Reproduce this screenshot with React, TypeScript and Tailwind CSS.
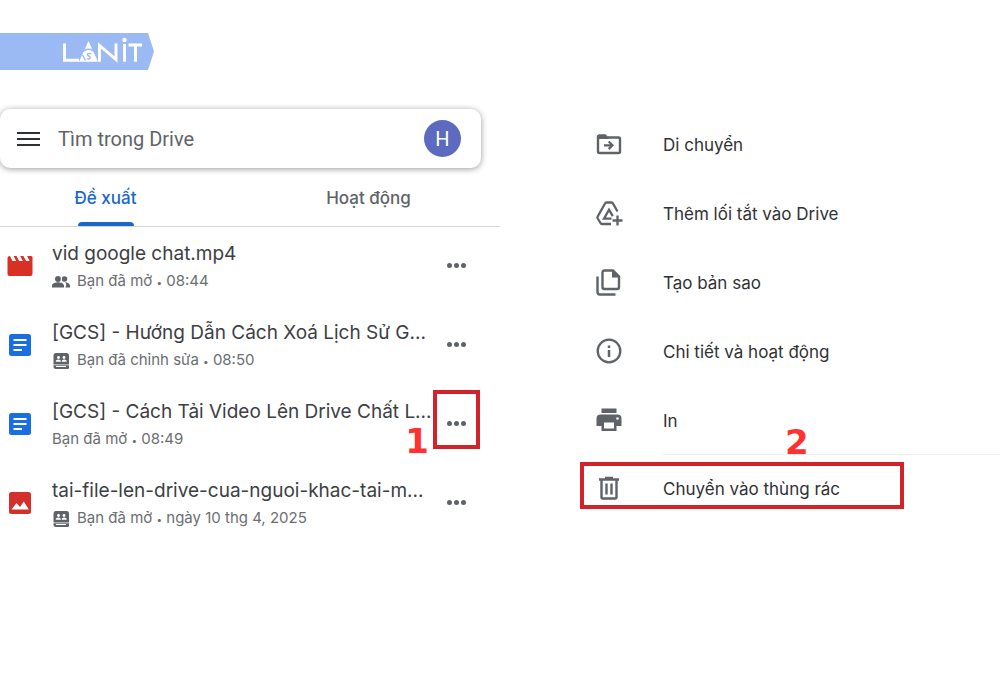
import { useState } from "react";
import type { ReactNode } from "react";

type FileKind = "video" | "doc" | "image";
type ShareKind = "people" | "team" | "none";

interface FileItem {
  id: number;
  kind: FileKind;
  share: ShareKind;
  title: string;
  action: string;
  time: string;
  step?: string;
}

interface MenuItem {
  label: string;
  icon: ReactNode;
  step?: string;
}

const files: FileItem[] = [
  { id: 1, kind: "video", share: "people", title: "vid google chat.mp4", action: "Bạn đã mở", time: "08:44" },
  { id: 2, kind: "doc", share: "team", title: "[GCS] - Hướng Dẫn Cách Xoá Lịch Sử G...", action: "Bạn đã chỉnh sửa", time: "08:50" },
  { id: 3, kind: "doc", share: "none", title: "[GCS] - Cách Tải Video Lên Drive Chất L...", action: "Bạn đã mở", time: "08:49", step: "1" },
  { id: 4, kind: "image", share: "team", title: "tai-file-len-drive-cua-nguoi-khac-tai-m...", action: "Bạn đã mở", time: "ngày 10 thg 4, 2025" },
];

const Logo = () => (
  <svg viewBox="0 0 154 37" className="h-[37px] w-[154px]" role="img" aria-label="LANIT">
    <path d="M0 0h148l6 18.500-6 18.500H0z" fill="#9bbaf4" />
    <g fill="none" stroke="#fff" strokeWidth="2.900">
      <path d="M64.500 10.500v16.800H79" />
      <path d="M99.500 28.700V12.500l16.500 14V10.500" />
      <path d="M124.500 11v17.700M128.500 12h13.500M135.500 12v16.700" />
    </g>
    <circle cx="124.500" cy="7" r="2.200" fill="#fff" />
    <path d="M88.500 8 79 28.700h19z" fill="#fff" />
    <path d="M83 18.500c3-3 8-3 11 0M91.500 21c-4-1.800-5.500 1-2.700 2s1.500 3.800-2 2.700M82.500 22l3 5.500" fill="none" stroke="#9bbaf4" strokeWidth="1.400" />
  </svg>
);

const FileIcon = ({ kind }: { kind: FileKind }) => {
  if (kind === "video") {
    return (
      <svg viewBox="0 0 26 26" className="size-[26px]" aria-hidden="true">
        <path d="M3 3 5.500 8h3.700L6.500 3h3L12.200 8h3.700L13.200 3h3.200l2.700 5h3.500l-2.500-5H24q1.500 0 1.500 1.500V21q0 2-2 2h-21q-2 0-2-2V5q0-2 2.500-2z" fill="#d93025" />
      </svg>
    );
  }
  if (kind === "doc") {
    return (
      <svg viewBox="0 0 26 26" className="size-[26px]" aria-hidden="true">
        <rect x="2" y="2" width="22" height="22" rx="2.500" fill="#1a6fe0" />
        <path d="M6.500 8h13M6.500 13h13M6.500 18h8.500" stroke="#fff" strokeWidth="2.200" />
      </svg>
    );
  }
  return (
    <svg viewBox="0 0 26 26" className="size-[26px]" aria-hidden="true">
      <rect x="2" y="2" width="22" height="22" rx="2.500" fill="#d32f2b" />
      <path d="m4.500 19.500 5-6.500 3.500 4 3.800-5.500 5 8z" fill="#fff" />
    </svg>
  );
};

const ShareIcon = ({ share }: { share: ShareKind }) => {
  if (share === "people") {
    return (
      <svg viewBox="0 0 18 18" className="size-[18px]" fill="#5f6368" aria-hidden="true">
        <circle cx="6" cy="6" r="3" />
        <circle cx="12.500" cy="6" r="2.800" />
        <path d="M0 14.500v-2c0-2.500 4-3.300 6-3.300s6 .8 6 3.300v2zM13.300 14.500H18v-2c0-2-2.600-3-5-3.200 1 .8 1.300 2 1.300 3z" />
        <path d="M9.300 3v6" stroke="#fff" strokeWidth="1" />
      </svg>
    );
  }
  return (
    <svg viewBox="0 0 18 18" className="size-[18px]" aria-hidden="true">
      <path d="M3.500 1h11Q17 1 17 3.500V12.500H1.500V3.500Q1.500 1 3.500 1zM1.500 13.200h15.500v2.800q0 1-1 1H4Q1.500 17 1.500 14.500z" fill="#5f6368" />
      <circle cx="6.500" cy="5.500" r="1.400" fill="#fff" />
      <circle cx="12" cy="5.500" r="1.400" fill="#fff" />
      <path d="M3.700 9.800c0-3 5.200-3 5.200 0zM9.600 9.800c0-3 5.200-3 5.200 0z" fill="#fff" />
      <path d="M4 14.500H14" stroke="#fff" strokeWidth="1" />
    </svg>
  );
};

const menu: MenuItem[] = [
  {
    label: "Di chuyển",
    icon: (
      <>
        <path d="M4.500 4.500h5.500l2 2h11.500q1.500 0 1.500 1.500v12.500q0 1.500-1.500 1.500h-19Q3 22 3 20.500V6Q3 4.500 4.500 4.500z" fill="none" stroke="currentColor" strokeWidth="2.400" />
        <path d="M3 4.500h8l3 3.500H3z" fill="currentColor" />
        <path d="M9 14.300h8.500M13.700 10.500l3.800 3.800-3.800 3.800" fill="none" stroke="currentColor" strokeWidth="2.200" />
      </>
    ),
  },
  {
    label: "Thêm lối tắt vào Drive",
    icon: (
      <g fill="none" stroke="currentColor" strokeWidth="2.300">
        <path d="M22.500 11.500 18 3.500q-.500-1-1.500-1h-5q-1 0-1.500 1L2.700 16.500q-.500 1 0 2l2.800 4.500q.500 1 1.500 1h9" />
        <path d="M16.500 18.700H9L14 9.800l3.800 6.400" />
        <path d="M22.500 15.500v10M17.500 20.500h10" />
      </g>
    ),
  },
  {
    label: "Tạo bản sao",
    icon: (
      <>
        <path d="M9 1.500h9l6 6v10.500q0 2-2 2H9.500q-2 0-2-2v-14.500q0-2 2-2z" fill="none" stroke="currentColor" strokeWidth="2.400" />
        <path d="M17 1.500v7h7z" fill="currentColor" />
        <path d="M2.500 7.500v15.500q0 2.500 2.500 2.500h15.500" fill="none" stroke="currentColor" strokeWidth="2.400" />
      </>
    ),
  },
  {
    label: "Chi tiết và hoạt động",
    icon: (
      <>
        <circle cx="14" cy="13" r="11.300" fill="none" stroke="currentColor" strokeWidth="2.300" />
        <path d="M14 12v7M14 7.500v2.500" stroke="currentColor" strokeWidth="2.500" />
      </>
    ),
  },
  {
    label: "In",
    icon: (
      <>
        <path d="M6.500 1.500h15V6h-15zM5.500 7.500h17q4 0 4 4V19h-5v5h-15v-5h-5v-7.500q0-4 4-4z" fill="currentColor" />
        <path d="M9 15.500h10v6H9z" fill="#fff" />
        <circle cx="22.500" cy="11.500" r="1.300" fill="#fff" />
      </>
    ),
  },
  {
    label: "Chuyển vào thùng rác",
    icon: (
      <g fill="none" stroke="currentColor" strokeWidth="2.400">
        <path d="M4 4.500h20M10 3h8" />
        <path d="M6.500 5v17q0 1.500 1.500 1.500h12q1.500 0 1.500-1.500V5M11.500 8.500v11M16.500 8.500v11" />
      </g>
    ),
    step: "2",
  },
];

const FileRow = ({ file }: { file: FileItem }) => (
  <li className="flex h-[79px] items-center">
    <div className="flex w-[52px] shrink-0 pl-[7px]">
      <FileIcon kind={file.kind} />
    </div>
    <div className="min-w-0 flex-1 pt-1">
      <p className="truncate font-['Inter','Liberation_Sans',sans-serif] text-[19px] leading-7 text-[#3c4043]">
        {file.title}
      </p>
      <p className="flex items-center gap-[7px] font-['Inter','Liberation_Sans',sans-serif] text-[15px] leading-[26px] text-[#6b6e72]">
        {file.share !== "none" && <ShareIcon share={file.share} />}
        <span>
          {file.action} <span className="text-[10px]">•</span> {file.time}
        </span>
      </p>
    </div>
    <div className="relative mr-5 mb-2 shrink-0">
      <button
        type="button"
        aria-label={`Tùy chọn khác: ${file.title}`}
        className={`flex h-[59px] w-[47px] items-center justify-center gap-[2px] border-4 pt-2 ${
          file.step ? "border-[#d2232a]" : "border-transparent"
        }`}
      >
        <span className="size-[5px] rounded-full bg-[#5f6368]" />
        <span className="size-[5px] rounded-full bg-[#5f6368]" />
        <span className="size-[5px] rounded-full bg-[#5f6368]" />
      </button>
      {file.step && (
        <span className="absolute right-[51px] -bottom-4 font-['DejaVu_Sans',sans-serif] text-[34px] leading-12 font-bold text-[#ff3131]">
          {file.step}
        </span>
      )}
    </div>
  </li>
);

export default function App() {
  const [search, setSearch] = useState("");

  return (
    <div className="min-h-screen bg-white pt-[33px]">
      <header>
        <Logo />
      </header>
      <main className="flex items-start">
        <section className="w-1/2 pt-[39px]">
          <div className="mr-[19px] flex h-[59px] items-center rounded-[10px] bg-white pr-5 pl-[17px] shadow-[0_1px_6px_rgba(0,0,0,0.4)]">
            <button type="button" aria-label="Menu" className="flex w-[23px] flex-col gap-[4px]">
              <span className="h-[2px] w-full bg-[#2f3235]" />
              <span className="h-[2px] w-full bg-[#2f3235]" />
              <span className="h-[2px] w-full bg-[#2f3235]" />
            </button>
            <input
              type="text"
              aria-label="Tìm trong Drive"
              placeholder="Tìm trong Drive"
              value={search}
              onChange={(event) => setSearch(event.target.value)}
              className="ml-[18px] min-w-0 flex-1 font-['Roboto','Liberation_Sans',sans-serif] text-[20px] leading-7 outline-none placeholder:text-[#5f6368]"
            />
            <button
              type="button"
              aria-label="Tài khoản"
              className="size-[37px] rounded-full bg-[#5c6bc0] font-['Roboto',sans-serif] text-[20px] text-white"
            >
              H
            </button>
          </div>
          <nav className="flex h-[59px] border-b border-[#d5d6d8] pr-[26px]">
            <a
              href="#suggested"
              className="flex h-full w-[211px] flex-col items-center justify-between pt-[18px] font-['Inter','Liberation_Sans',sans-serif] text-[17px] leading-6 font-medium text-[#1967c8]"
            >
              Đề xuất
              <span className="h-1 w-14 rounded-t bg-[#1967c8]" />
            </a>
            <a
              href="#activity"
              className="flex-1 pt-[18px] pl-[52px] text-center font-['Inter','Liberation_Sans',sans-serif] text-[17px] leading-6 font-medium text-[#5f6368]"
            >
              Hoạt động
            </a>
          </nav>
          <ul className="-mt-px">
            {files.map((file) => (
              <FileRow key={file.id} file={file} />
            ))}
          </ul>
        </section>
        <section className="w-1/2 pt-[51px] pl-20">
          <ul>
            {menu.map((item) => (
              <li key={item.label} className={item.step ? "relative" : "mb-[22px]"}>
                {item.step && <hr className="-mt-3 mb-[7px] ml-[83px] border-[#eeeff1]" />}
                <button
                  type="button"
                  className={`flex h-[47px] w-[324px] items-center gap-10 border-4 pl-[11px] text-left font-['Inter','Liberation_Sans',sans-serif] text-[17px] text-[#303134] ${
                    item.step ? "border-[#d2232a] pt-[7px]" : "border-transparent"
                  }`}
                >
                  <svg viewBox="0 0 28 28" className="size-7 shrink-0 text-[#5f6368]" aria-hidden="true">
                    {item.icon}
                  </svg>
                  <span className="pt-[2px]">{item.label}</span>
                </button>
                {item.step && (
                  <span className="absolute -top-9 left-[205px] font-['DejaVu_Sans',sans-serif] text-[34px] leading-12 font-bold text-[#ff3131]">
                    {item.step}
                  </span>
                )}
              </li>
            ))}
          </ul>
        </section>
      </main>
    </div>
  );
}
